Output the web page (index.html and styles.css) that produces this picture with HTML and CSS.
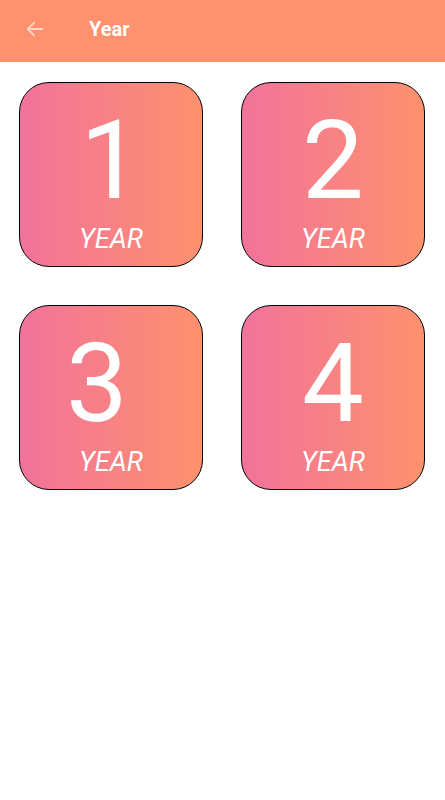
FILE: index.html
```html
<!DOCTYPE html>
<html lang="en">
<head>
<meta charset="UTF-8">
<meta name="viewport" content="width=device-width, initial-scale=1.0">
<title>Year</title>
<link rel="stylesheet" href="styles.css">
</head>
<body>

<header class="toolbar">
    <a href="#" class="back" aria-label="Back">
        <svg width="22" height="22" viewBox="0 0 24 24">
            <path d="M20 12H4M11 5l-7 7 7 7" fill="none" stroke="currentColor" stroke-width="2" stroke-linecap="round" stroke-linejoin="round"/>
        </svg>
    </a>
    <h1 class="title">Year</h1>
</header>

<main class="grid">
    <a href="#" class="card">
        <span class="num">1</span>
        <span class="label">YEAR</span>
    </a>
    <a href="#" class="card">
        <span class="num">2</span>
        <span class="label">YEAR</span>
    </a>
    <a href="#" class="card">
        <span class="num num-left">3</span>
        <span class="label">YEAR</span>
    </a>
    <a href="#" class="card">
        <span class="num">4</span>
        <span class="label">YEAR</span>
    </a>
</main>

</body>
</html>
```

FILE: styles.css
```css
body {
    font-family: Roboto, "Liberation Sans", sans-serif;
    margin: 0;
    padding: 0;
    background-color: #fff;
}
.toolbar {
    height: 62px;
    display: flex;
    align-items: center;
    background-color: #ff916e;
    color: #fff;
}
.back {
    display: flex;
    margin-left: 24px;
    margin-top: -4px;
    color: rgba(255, 255, 255, 0.6);
}
.title {
    margin: -4px 0 0 43px;
    font-size: 20px;
    font-weight: bold;
}
.grid {
    display: grid;
    grid-template-columns: 184px 184px;
    gap: 38px;
    padding: 20px 19px;
}
.card {
    height: 185px;
    box-sizing: border-box;
    border: 1px solid #000;
    border-radius: 30px;
    background: linear-gradient(to right, #f1739b, #ff916d);
    color: #fff;
    text-decoration: none;
    display: flex;
    flex-direction: column;
    align-items: center;
}
.num {
    font-size: 110px;
    line-height: 80px;
    margin-top: 38px;
}
.num-left {
    margin-right: 28px;
}
.label {
    font-size: 27px;
    line-height: 28px;
    font-style: italic;
    margin-top: 24px;
}
```
